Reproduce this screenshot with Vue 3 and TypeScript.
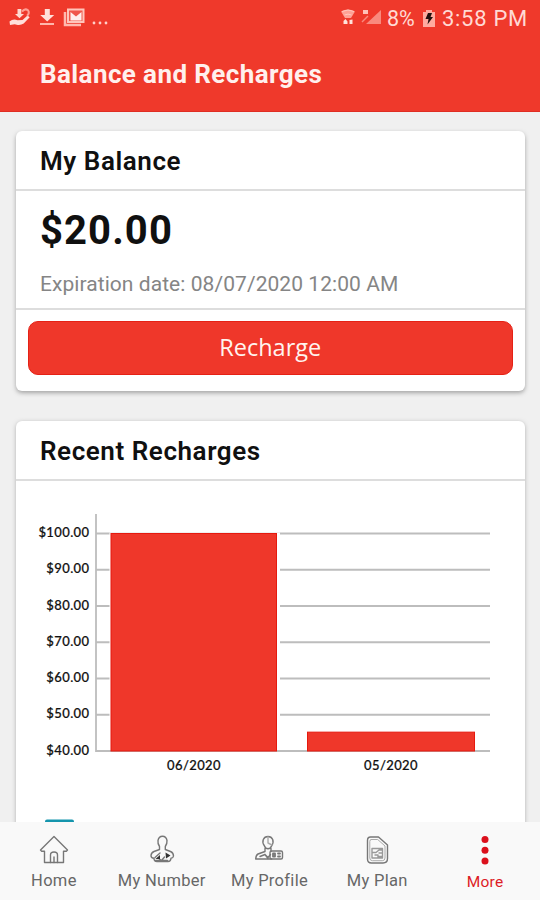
<script setup lang="ts">
interface Recharge {
  month: string
  amount: number
}

const recharges: Recharge[] = [
  { month: '06/2020', amount: 100 },
  { month: '05/2020', amount: 45.2 },
]

const ticks: number[] = [100, 90, 80, 70, 60, 50, 40]
const baseline = 270
const unit = 3.625
const yOf = (value: number): number => baseline - (value - 40) * unit
const barX = (index: number): number => 94.5 + index * 196.5
const barWidth = (index: number): number => (index === 0 ? 166.5 : 168)

const tabs: string[] = ['Home', 'My Number', 'My Profile', 'My Plan', 'More']
</script>

<template>
  <div class="screen">
    <header class="top">
      <div class="status">
        <svg class="status-left" width="100" height="24" viewBox="0 0 100 24">
          <path d="M1.500 15.500q4-3.500 8-1.200l5-.3 5-4.500 2.200 1.700-6 6.300q-3 2-7 1.200l-2-.4-4.700.7z" fill="#ffe0da" />
          <path d="M9.500 3h3.800v5H16l-4.500 4.200L7 8h2.500z" fill="#ffd9d1" />
          <path d="M14 5.500q3-3.500 6-1.200 2 3-1 5.500" fill="none" stroke="#ff9f93" stroke-width="2" />
          <path d="M36.800 3h5v6h4.400l-7 6.500-7-6.500h4.600z" fill="#ffe0da" />
          <path d="M32 17h14v2H32z" fill="#ffb6ab" />
          <path d="M57 6v13h16" fill="none" stroke="#ffb9ae" stroke-width="2.500" />
          <rect x="60" y="3.500" width="15.500" height="12.500" fill="#f0584b" stroke="#ffc5bb" stroke-width="2" />
          <path d="M62.500 6 68 10.500 73.500 6v8.500h-11z" fill="#fff0ec" />
          <g fill="#ffcfc7"><circle cx="86" cy="17" r="1.400" /><circle cx="92" cy="17" r="1.400" /><circle cx="98" cy="17" r="1.400" /></g>
        </svg>
        <div class="status-right">
          <svg width="46" height="22" viewBox="0 0 46 22">
            <path d="M0 4.500q7-4 14 0l-4 6.500H4z" fill="#ff9f93" />
            <path d="M1 4.500q6-3 12 0M3.500 8q3.500-1.800 7 0" fill="none" stroke="#ffc6bd" />
            <path d="M2.500 17v-3l2-2 2 2.500V17zM8.500 17v-4l3-.5V17z" fill="#ffe2db" />
            <path d="M40 3v14H25z" fill="#f98a7e" />
            <path d="M22 3h5v4h-5z" fill="#ffc0b7" />
            <path d="m21 15 6-6" stroke="#f98a7e" stroke-width="1.500" />
          </svg>
          <span class="percent">8%</span>
          <svg class="battery" width="12" height="17" viewBox="0 0 12 17">
            <path d="M3 0h6v2h3v15H0V2h3z" fill="#ffab9f" />
            <path d="M5 3h4L7.500 7h2.500l-5.500 7.500L5.500 9H2.500z" fill="#21110f" />
          </svg>
          <span class="clock">3:58 PM</span>
        </div>
      </div>
      <h1>Balance and Recharges</h1>
    </header>

    <main>
      <section class="card">
        <h2>My Balance</h2>
        <div class="balance">
          <strong>$20.00</strong>
          <p>Expiration date: 08/07/2020 12:00 AM</p>
        </div>
        <div class="action"><button type="button">Recharge</button></div>
      </section>

      <section class="card recent">
        <h2>Recent Recharges</h2>
        <svg class="chart" width="508" height="342" viewBox="0 0 508 342">
          <g stroke="#bdbdbd" stroke-width="1.800">
            <line v-for="tick in ticks" :key="tick" x1="80" x2="474" :y1="yOf(tick)" :y2="yOf(tick)" />
            <line x1="80" x2="80" y1="33" y2="271" />
          </g>
          <text v-for="tick in ticks" :key="'label' + tick" class="tick" x="73.500" :y="yOf(tick) + 3.500" text-anchor="end">${{ tick }}.00</text>
          <g v-for="(item, i) in recharges" :key="item.month">
            <rect :x="barX(i) - 1" :y="yOf(item.amount) - 1" :width="barWidth(i) + 4" :height="baseline - yOf(item.amount)" fill="#fff" />
            <rect class="bar" :x="barX(i) + .5" :y="yOf(item.amount)" :width="barWidth(i) - 1" :height="baseline - yOf(item.amount)" />
            <text class="tick" :x="178 + i * 197" y="289" text-anchor="middle">{{ item.month }}</text>
          </g>
          <rect x="29" y="338.500" width="29" height="8" rx="2" fill="#1595ad" />
        </svg>
      </section>
    </main>

    <nav>
      <a v-for="(tab, i) in tabs" :key="tab" :class="{ active: i === 4 }">
        <svg width="34" height="34" viewBox="0 0 34 34" fill="none" stroke="#777" stroke-width="1.400" stroke-linejoin="round" stroke-linecap="round">
          <g v-if="i === 0">
            <path d="M3.500 17 17 3.500 30.500 17l-1.200 1.300h-2.800v11.200H7.500V18.300H4.700z" />
            <path d="M13.500 29.500V22q0-3 3.500-3t3.500 3v7.500M17 29.500V24" />
          </g>
          <g v-else-if="i === 1">
            <path d="M14.500 13.500q-2-3-1.500-6 .8-4.200 4.500-4.200T22 7.500q.3 3-1.700 6v3l5.200 2q3 1.200 3 4.500-.3 2-2.500 2.200-.3 3.300-3 3.300H12q-3 0-3-3.300-3-.2-3-2.500 0-3 3-4.200l5.500-2z" />
            <path d="M10 24.500 15 20m-2 5 3.500 2.500 3-3.500m-9 3.500h12" />
            <path d="m10.500 26 4.500-4v4zM20.500 19.500l5 3-4.500 3z" fill="#333" stroke="none" />
          </g>
          <g v-else-if="i === 2" transform="translate(-1)">
            <path d="M13.500 13Q11 9.500 12.300 6.500q1.300-3 4.700-3t4.700 3q1.200 3-1.200 6.500-1 2.800-3.500 2.800T13.500 13zM14 15.500v3L7 21q-2 1-2.300 5h16M20 15.500v3" />
            <path d="m9 23.500 5-2 3 3 2.500-3M14 21.500l3 4" />
            <rect x="19" y="18" width="12.500" height="8" rx="1.500" />
            <path d="M22 20.500h2v3h-2zM27 20.500h2m-2 3h2" stroke-width="1.800" />
            <path d="M17 4v6l4 2" stroke="#aaa" />
          </g>
          <g v-else-if="i === 3">
            <path d="M10.500 4h8l9 8v13.500q0 4.500-4.500 4.500H11.500q-4 0-4-4V7.500q0-3.500 3-3.500z" />
            <path d="M11.200 6.500h6.500l7.300 6.500v12q0 2.700-2.700 2.700H12.500q-2.700 0-2.700-2.700V8.500q0-2 1.400-2z" stroke="#aaa" stroke-width="1" />
            <path d="M12 15.500h10.500v9.500H12zM12 19.500h4l3-2.500h3M15 22h3v3m4-5h-3m3 3.500h-3" stroke="#999" />
          </g>
          <g v-else fill="#db101c" stroke="none">
            <circle cx="17" cy="6.500" r="3.500" /><circle cx="17" cy="17.200" r="3.500" /><circle cx="17" cy="28" r="3.500" />
          </g>
        </svg>
        <span>{{ tab }}</span>
      </a>
    </nav>
  </div>
</template>

<style>
body { margin: 0; }
</style>

<style scoped>
.screen {
  width: 540px;
  height: 900px;
  overflow: hidden;
  display: flex;
  flex-direction: column;
  background: #f0f0f0;
  color: #101010;
  font-family: Roboto, "Liberation Sans", sans-serif;
}
.top { height: 112px; flex: none; background: #ef392b; border-bottom: 1px solid #df2e23; box-sizing: border-box; color: #fff0ed; }
.status { height: 36px; display: flex; justify-content: space-between; align-items: center; padding: 0 12px 0 8px; }
.status-right { display: flex; align-items: center; color: #ffdad4; font-size: 22px; }
.percent { width: 36px; font-size: 21.500px; }
.battery { margin-right: 7px; }
.clock { width: 86px; white-space: nowrap; letter-spacing: .7px; }
h1, h2, p { margin: 0; }
h1 { padding-left: 40px; font-size: 26px; line-height: 76px; font-weight: 700; letter-spacing: .4px; }
main { height: 710px; flex: none; overflow: hidden; padding: 19px 15.500px 0 16px; box-sizing: border-box; }
.card { background: #fff; border-radius: 6px; box-shadow: 0 1px 4px #8889; }
.card:first-child { height: 260px; box-shadow: 0 2px 4px #888b; }
.recent { height: 410px; margin-top: 30px; }
h2 { height: 60px; box-sizing: border-box; border-bottom: 2px solid #ddd; padding-left: 24px; line-height: 60px; font-size: 26px; font-weight: 600; letter-spacing: .57px; }
.balance { height: 119px; box-sizing: border-box; border-bottom: 2px solid #ddd; padding: 17px 24px 0; }
.balance strong { display: block; font-size: 40px; line-height: 46px; letter-spacing: 1.100px; }
.balance p { margin-top: 17px; font-size: 21px; line-height: 26px; color: #858585; letter-spacing: .06px; white-space: nowrap; }
.action { padding: 11px 12px; }
button { display: block; width: 100%; height: 54px; padding: 0 0 2px; border: 1px solid #e52115; border-radius: 10px; background: #ef372a; color: #fff4ef; font: 500 23.500px "Open Sans", sans-serif; letter-spacing: 0; }
.chart { display: block; }
.bar { fill: #ef372a; stroke: #e6190e; }
.tick { font: 500 13px Lato, sans-serif; fill: #111; stroke: #111; stroke-width: .2px; letter-spacing: .4px; }
nav { height: 78px; flex: none; display: flex; background: #f9f9f9; color: #676767; }
nav a { width: 107.800px; display: flex; flex-direction: column; align-items: center; padding-top: 11px; }
nav span { font-size: 16.500px; line-height: 20px; margin-top: 4px; letter-spacing: .3px; white-space: nowrap; }
nav .active { color: #dd1c26; }
nav .active span { font-size: 15.500px; margin-top: 5px; }
</style>
